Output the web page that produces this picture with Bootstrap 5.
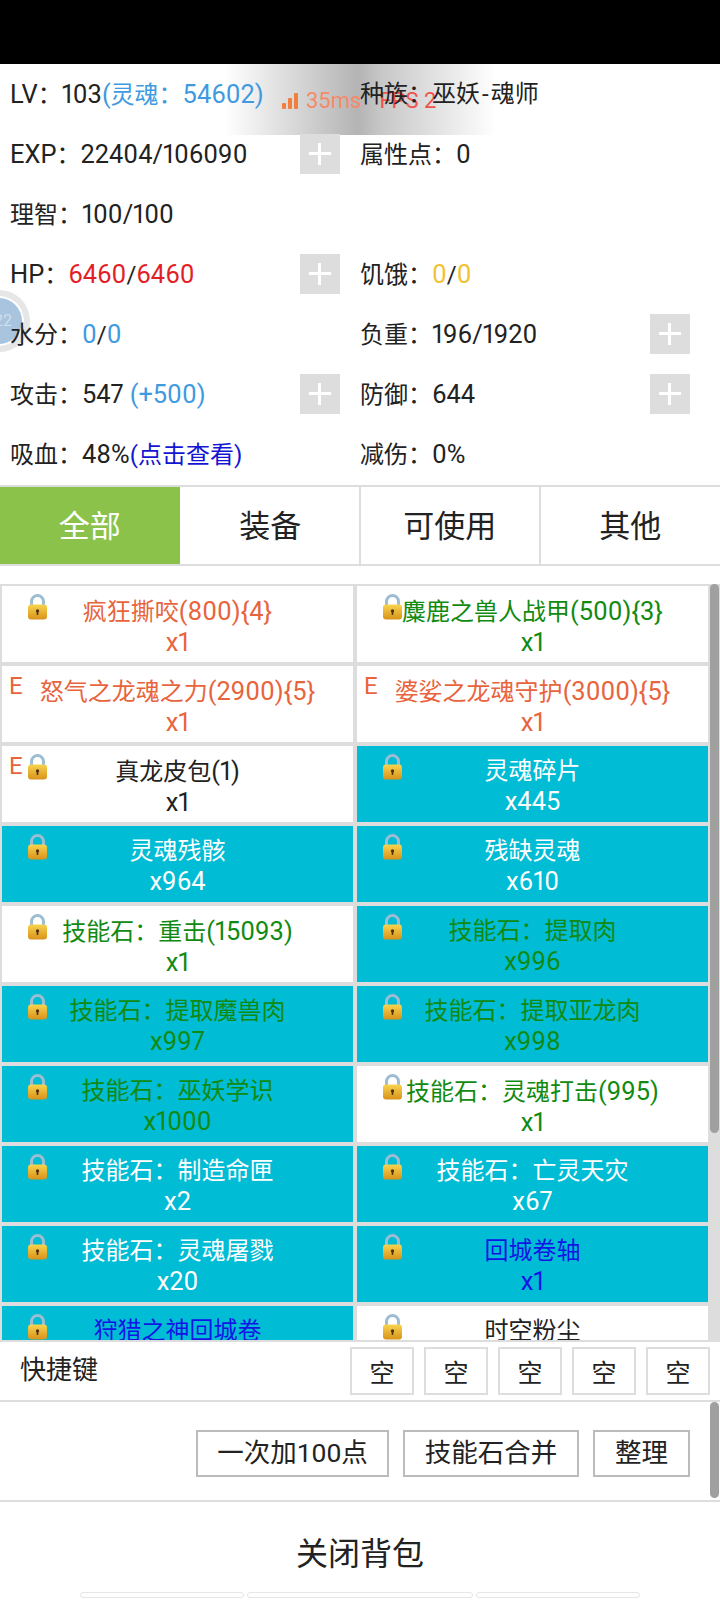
<!DOCTYPE html>
<html lang="zh">
<head>
    <meta charset="UTF-8">
    <meta name="viewport" content="width=device-width, initial-scale=1.0">
    <title>背包</title>
    <link href="https://cdn.jsdelivr.net/npm/bootstrap@5.3.0/dist/css/bootstrap.min.css" rel="stylesheet">
    <style>
        body { width: 720px; height: 1600px; overflow: hidden; position: relative; background: #fff; color: #222; font-family: Roboto, "Noto Sans CJK SC", sans-serif; font-size: 24px; font-variant-numeric: proportional-nums; }
        .top-black { height: 64px; background: #000; }
        .lat { font-size: 1.06em; }
        .wide-dash { margin: 0 2px; }

        .stats { position: relative; z-index: 2; }
        .stat-cell { height: 60px; }
        .stat-cell.left-side { padding: 0 20px 0 10px; }
        .stat-cell.right-side { padding: 0 30px 0 0; }
        .plus-btn { width: 40px; height: 40px; background: #ddd; position: relative; flex: none; }
        .plus-btn::before { content: ""; position: absolute; left: 9px; right: 9px; top: 18px; height: 3px; background: #fff; }
        .plus-btn::after { content: ""; position: absolute; top: 9px; bottom: 9px; left: 18px; width: 3px; background: #fff; }
        .c-blue { color: #3f9ae0; }
        .c-red { color: #e21e26; }
        .c-yellow { color: #f2c230; }
        .c-navy { color: #1414d2; }

        .tabs-bar { margin-top: 1px; border-top: 2px solid #ddd; border-bottom: 2px solid #ddd; height: 81px; }
        .tab-item { width: 180px; font-size: 31px; color: #222; border-right: 2px solid #ddd; padding-top: 3px; }
        .tab-item:last-child { border-right: 0; }
        .tab-item.active-tab { width: 182px; background: #8bc34a; background-clip: padding-box; color: #fff; border-right-color: #fff; }

        .bag { margin-top: 18px; height: 756px; overflow: hidden; position: relative; background: #ddd; padding: 2px 12px 0 2px; }
        .bag-grid { display: grid; grid-template-columns: 351px 351px; column-gap: 4px; row-gap: 4px; }
        .bag-cell { height: 76px; background: #fff; position: relative; text-align: center; padding-top: 10px; line-height: 30px; color: #222; }
        .bag-cell.cyan-cell { background: #00bcd4; }
        .bag-cell.t-orange { color: #e8643c; }
        .bag-cell.t-green { color: #128a12; }
        .bag-cell.t-blue { color: #1414e6; }
        .bag-cell.t-white { color: #fff; }
        .lock-ic { position: absolute; left: 25px; top: 8px; width: 21px; height: 26px; }
        .equip-mark { position: absolute; left: 7px; top: 5px; color: #e8643c; }
        .bag-thumb { position: absolute; right: 1px; top: 0; width: 9px; height: 549px; background: #a0a0a0; border-radius: 5px; }

        .quick-bar { border-top: 2px solid #ddd; border-bottom: 2px solid #ddd; height: 62px; padding: 5px 10px 0 20px; }
        .quick-label { font-size: 26px; margin-top: 4px; }
        .quick-keys { gap: 10px; }
        .quick-key { width: 64px; height: 48px; border: 2px solid #ddd; font-size: 25px; padding-top: 5px; }

        .action-bar { height: 100px; border-bottom: 2px solid #ddd; padding: 28px 30px 0 0; position: relative; gap: 14px; }
        .action-btn { height: 47px; border: 2px solid #bbb; border-radius: 0; font-size: 26.5px; line-height: 1; padding: 0; color: #222; background: #fff; font-family: inherit; }
        .w-one { width: 193px; }
        .w-two { width: 176px; }
        .w-three { width: 97px; }
        .action-thumb { position: absolute; right: 1px; top: 0; width: 9px; height: 96px; background: #a0a0a0; border-radius: 5px; }

        .close-row { height: 90px; font-size: 32px; color: #222; padding-top: 13px; }
        .peek-row { padding-left: 80px; gap: 3px; }
        .peek-box { height: 6px; border: 1px solid #e6e6e6; border-radius: 3px; background: #fff; }

        .net-overlay { position: absolute; z-index: 1; left: 225px; top: 64px; width: 271px; height: 71px; background: linear-gradient(90deg, rgba(170,170,170,0), #b4b4b4 49%, #c8c8c8 58%, rgba(200,200,200,0)); }
        .net-text { position: absolute; left: 57px; top: 21px; font-size: 22px; line-height: 32px; white-space: nowrap; display: flex; align-items: center; }
        .net-ms { color: #f68a68; margin-left: 8px; }
        .net-fps { color: #f0524c; margin-left: 18px; }

        .float-ball { position: absolute; z-index: 1; left: -32px; top: 290px; width: 62px; height: 62px; border-radius: 50%; background: #e6e6e6; display: flex; align-items: center; justify-content: center; }
        .float-inner { width: 46px; height: 46px; border-radius: 50%; background: #a9c4de; box-shadow: 0 0 0 2px #fff; display: flex; align-items: center; justify-content: flex-end; font-size: 16px; color: #cfdeec; padding-right: 10px; }
    </style>
</head>
<body>
    <svg width="0" height="0" class="position-absolute">
        <defs>
            <linearGradient id="lockGold" x1="0" y1="0" x2="0" y2="1">
                <stop offset="0" stop-color="#f8d44e"/>
                <stop offset="1" stop-color="#d8921a"/>
            </linearGradient>
        </defs>
        <symbol id="lockIcon" viewBox="0 0 21 26">
            <path d="M4.5 12V7.5a6 6 0 0 1 12 0V12" fill="none" stroke="#9dbdd2" stroke-width="3"/>
            <rect x="1" y="10.5" width="19" height="15" rx="3" fill="url(#lockGold)"/>
            <circle cx="10.5" cy="17" r="1.7" fill="#4e3410"/>
            <rect x="9.7" y="17" width="1.6" height="4" fill="#4e3410"/>
        </symbol>
    </svg>

    <div class="top-black"></div>

    <div class="net-overlay">
        <div class="net-text">
            <svg width="16" height="16" viewBox="0 0 16 16"><rect x="0" y="10" width="4" height="6" rx="1" fill="#f0803c"/><rect x="6" y="5" width="4" height="11" rx="1" fill="#f0803c"/><rect x="12" y="0" width="4" height="16" rx="1" fill="#f0803c"/></svg>
            <span class="net-ms">35ms</span><span class="net-fps">FPS 2</span>
        </div>
    </div>
    <div class="float-ball"><div class="float-inner">22</div></div>

    <div class="stats" id="statsBlock">
        <div class="row g-0">
            <div class="col-6 stat-cell left-side d-flex align-items-center"><span>LV：103<span class="c-blue">(灵魂：54602)</span></span></div>
            <div class="col-6 stat-cell right-side d-flex align-items-center"><span>种族：巫妖<span class="wide-dash">-</span>魂师</span></div>
        </div>
        <div class="row g-0">
            <div class="col-6 stat-cell left-side d-flex align-items-center justify-content-between"><span>EXP：22404/106090</span><div class="plus-btn"></div></div>
            <div class="col-6 stat-cell right-side d-flex align-items-center"><span>属性点：0</span></div>
        </div>
        <div class="row g-0">
            <div class="col-6 stat-cell left-side d-flex align-items-center"><span>理智：100/100</span></div>
            <div class="col-6 stat-cell right-side"></div>
        </div>
        <div class="row g-0">
            <div class="col-6 stat-cell left-side d-flex align-items-center justify-content-between"><span>HP：<span class="c-red">6460</span>/<span class="c-red">6460</span></span><div class="plus-btn"></div></div>
            <div class="col-6 stat-cell right-side d-flex align-items-center"><span>饥饿：<span class="c-yellow">0</span>/<span class="c-yellow">0</span></span></div>
        </div>
        <div class="row g-0">
            <div class="col-6 stat-cell left-side d-flex align-items-center"><span>水分：<span class="c-blue">0</span>/<span class="c-blue">0</span></span></div>
            <div class="col-6 stat-cell right-side d-flex align-items-center justify-content-between"><span>负重：196/1920</span><div class="plus-btn"></div></div>
        </div>
        <div class="row g-0">
            <div class="col-6 stat-cell left-side d-flex align-items-center justify-content-between"><span>攻击：547 <span class="c-blue">(+500)</span></span><div class="plus-btn"></div></div>
            <div class="col-6 stat-cell right-side d-flex align-items-center justify-content-between"><span>防御：644</span><div class="plus-btn"></div></div>
        </div>
        <div class="row g-0">
            <div class="col-6 stat-cell left-side d-flex align-items-center"><span>吸血：48%<span class="c-navy">(点击查看)</span></span></div>
            <div class="col-6 stat-cell right-side d-flex align-items-center"><span>减伤：0%</span></div>
        </div>
    </div>

    <div class="tabs-bar d-flex">
        <div class="tab-item active-tab d-flex align-items-center justify-content-center">全部</div>
        <div class="tab-item d-flex align-items-center justify-content-center">装备</div>
        <div class="tab-item d-flex align-items-center justify-content-center">可使用</div>
        <div class="tab-item d-flex align-items-center justify-content-center">其他</div>
    </div>

    <div class="bag">
        <div class="bag-grid" id="bagGrid"></div>
        <div class="bag-thumb"></div>
    </div>

    <div class="quick-bar d-flex justify-content-between">
        <div class="quick-label">快捷键</div>
        <div class="d-flex quick-keys" id="quickKeys"></div>
    </div>

    <div class="action-bar d-flex justify-content-end">
        <button class="btn action-btn w-one">一次加100点</button>
        <button class="btn action-btn w-two">技能石合并</button>
        <button class="btn action-btn w-three">整理</button>
        <div class="action-thumb"></div>
    </div>

    <div class="close-row d-flex align-items-center justify-content-center">关闭背包</div>

    <div class="peek-row d-flex">
        <div class="peek-box" style="width: 164px"></div>
        <div class="peek-box" style="width: 226px"></div>
        <div class="peek-box" style="width: 164px"></div>
    </div>

    <script>
        // name, count, text colour, cyan background, locked, equipped
        const items = [
            ['疯狂撕咬(800){4}', 'x1', 't-orange', false, true, false],
            ['麋鹿之兽人战甲(500){3}', 'x1', 't-green', false, true, false],
            ['怒气之龙魂之力(2900){5}', 'x1', 't-orange', false, false, true],
            ['婆娑之龙魂守护(3000){5}', 'x1', 't-orange', false, false, true],
            ['真龙皮包(1)', 'x1', '', false, true, true],
            ['灵魂碎片', 'x445', 't-white', true, true, false],
            ['灵魂残骸', 'x964', 't-white', true, true, false],
            ['残缺灵魂', 'x610', 't-white', true, true, false],
            ['技能石：重击(15093)', 'x1', 't-green', false, true, false],
            ['技能石：提取肉', 'x996', 't-green', true, true, false],
            ['技能石：提取魔兽肉', 'x997', 't-green', true, true, false],
            ['技能石：提取亚龙肉', 'x998', 't-green', true, true, false],
            ['技能石：巫妖学识', 'x1000', 't-green', true, true, false],
            ['技能石：灵魂打击(995)', 'x1', 't-green', false, true, false],
            ['技能石：制造命匣', 'x2', 't-white', true, true, false],
            ['技能石：亡灵天灾', 'x67', 't-white', true, true, false],
            ['技能石：灵魂屠戮', 'x20', 't-white', true, true, false],
            ['回城卷轴', 'x1', 't-blue', true, true, false],
            ['狩猎之神回城卷', '', 't-blue', true, true, false],
            ['时空粉尘', '', '', false, true, false]
        ];

        const grid = document.getElementById('bagGrid');
        items.forEach(item => {
            const [name, count, color, cyan, locked, equipped] = item;
            const cell = `
                <div class="bag-cell ${cyan ? 'cyan-cell' : ''} ${color}">
                    ${equipped ? '<span class="equip-mark">E</span>' : ''}
                    ${locked ? '<svg class="lock-ic"><use href="#lockIcon"/></svg>' : ''}
                    <div class="item-line">${name}</div>
                    <div class="item-line">${count}</div>
                </div>`;
            grid.insertAdjacentHTML('beforeend', cell);
        });

        const keys = document.getElementById('quickKeys');
        for (let i = 0; i < 5; i++) {
            keys.insertAdjacentHTML('beforeend', '<div class="quick-key d-flex align-items-center justify-content-center">空</div>');
        }

        // the digits in the game font run a little larger than the CJK
        function wrapLatin(root) {
            const walker = document.createTreeWalker(root, NodeFilter.SHOW_TEXT);
            const nodes = [];
            while (walker.nextNode()) nodes.push(walker.currentNode);
            nodes.forEach(node => {
                if (!/[A-Za-z0-9]/.test(node.nodeValue)) return;
                const span = document.createElement('span');
                span.innerHTML = node.nodeValue.replace(/[A-Za-z0-9()+%\/{}-]+/g, m => `<span class="lat">${m}</span>`);
                node.replaceWith(span);
            });
        }
        wrapLatin(document.getElementById('statsBlock'));
        document.querySelectorAll('.item-line').forEach(wrapLatin);
    </script>
    <script src="https://cdn.jsdelivr.net/npm/bootstrap@5.3.0/dist/js/bootstrap.bundle.min.js"></script>
</body>
</html>
